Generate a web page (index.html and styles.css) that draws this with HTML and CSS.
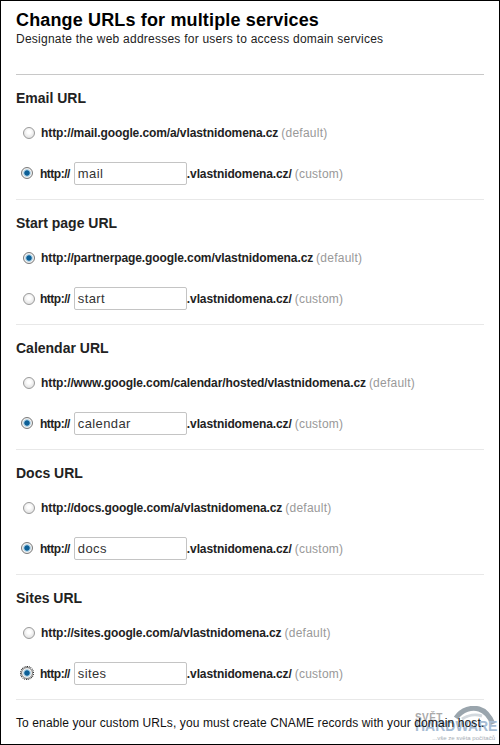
FILE: index.html
```html
<!DOCTYPE html>
<html lang="en">
<head>
<meta charset="utf-8">
<title>Change URLs</title>
<link rel="stylesheet" href="styles.css">
</head>
<body>
<main class="frame">
  <header class="head">
    <h1>Change URLs for multiple services</h1>
    <p>Designate the web addresses for users to access domain services</p>
  </header>
  <section class="svc first">
    <h2>Email URL</h2>
    <div class="row def"><span class="radio"></span><b>http://mail.google.com/a/vlastnidomena.cz</b><span class="note">(default)</span></div>
    <div class="row cus"><span class="radio on"></span><b class="pre">http://</b><span class="input">mail</span><b>.vlastnidomena.cz/</b><span class="note">(custom)</span></div>
  </section>
  <section class="svc">
    <h2>Start page URL</h2>
    <div class="row def"><span class="radio on"></span><b>http://partnerpage.google.com/vlastnidomena.cz</b><span class="note">(default)</span></div>
    <div class="row cus"><span class="radio"></span><b class="pre">http://</b><span class="input">start</span><b>.vlastnidomena.cz/</b><span class="note">(custom)</span></div>
  </section>
  <section class="svc">
    <h2>Calendar URL</h2>
    <div class="row def"><span class="radio"></span><b>http://www.google.com/calendar/hosted/vlastnidomena.cz</b><span class="note">(default)</span></div>
    <div class="row cus"><span class="radio on"></span><b class="pre">http://</b><span class="input">calendar</span><b>.vlastnidomena.cz/</b><span class="note">(custom)</span></div>
  </section>
  <section class="svc">
    <h2>Docs URL</h2>
    <div class="row def"><span class="radio"></span><b>http://docs.google.com/a/vlastnidomena.cz</b><span class="note">(default)</span></div>
    <div class="row cus"><span class="radio on"></span><b class="pre">http://</b><span class="input">docs</span><b>.vlastnidomena.cz/</b><span class="note">(custom)</span></div>
  </section>
  <section class="svc">
    <h2>Sites URL</h2>
    <div class="row def"><span class="radio"></span><b>http://sites.google.com/a/vlastnidomena.cz</b><span class="note">(default)</span></div>
    <div class="row cus"><span class="radio on focus"></span><b class="pre">http://</b><span class="input">sites</span><b>.vlastnidomena.cz/</b><span class="note">(custom)</span></div>
  </section>
  <div class="mark">
    <svg class="swoosh" width="42" height="22" viewBox="0 0 42 22"><path d="M2 12C8 3 18 1 25 3c7 2 11 8 14 15" fill="none" stroke="#9aa5ad" stroke-width="5"/><path d="M8 13c6-4 14-5 20-3" fill="none" stroke="#d3d9de" stroke-width="3"/></svg>
    <span class="m1">SVĚT</span>
    <span class="m2">HARDWARE</span>
    <span class="m3">...vše ze světa počítačů</span>
  </div>
  <p class="foot">To enable your custom URLs, you must create CNAME records with your domain host.</p>
</main>
</body>
</html>
```
FILE: styles.css
```css
* { box-sizing: border-box; }
html, body { margin: 0; padding: 0; background: #fff; }
body { width: 500px; height: 745px; font-family: "Liberation Sans", Arial, sans-serif; color: #111; }
.frame { position: relative; width: 500px; height: 745px; border: 1px solid #000; padding: 0 15px; overflow: hidden; }
.head { height: 74px; padding-top: 9px; border-bottom: 1px solid #c8c8c8; }
h1 { margin: 0; font-size: 18px; line-height: 20px; font-weight: bold; letter-spacing: 0.15px; color: #000; }
.head p { margin: 0; font-size: 12px; line-height: 18px; letter-spacing: 0.02em; color: #222; }
.svc { height: 125px; border-bottom: 1px solid #e8e8e8; }
h2 { margin: 0; padding-top: 14px; font-size: 14px; line-height: 18px; font-weight: bold; color: #222; }
.row { display: flex; align-items: center; font-size: 12px; color: #222; }
.def { margin-top: 16px; height: 20px; padding-left: 7px; }
.cus { margin-top: 19px; height: 23px; padding-left: 5px; }
.row b { font-weight: bold; letter-spacing: -0.1px; }
.radio { width: 12px; height: 12px; border-radius: 50%; border: 1px solid #9a9a9a; background: radial-gradient(circle at 50% 40%, #fff 20%, #dcdcdc 90%); margin-right: 6px; flex: none; }
.cus .radio { margin-right: 7px; margin-top: -2px; }
.cus .radio:not(.on) { margin-left: 2px; margin-right: 5px; margin-top: 0; }
.radio.on { background: radial-gradient(circle, #0d5f96 0 32%, #8fc0dc 42%, #f2f2f2 60%, #d8d8d8 100%); border-color: #7a7a7a; }
.radio.focus { outline: 1px dotted #000; outline-offset: 0; }
.row .pre { margin-right: 4px; letter-spacing: -0.5px; }
.input { width: 113px; height: 23px; border: 1px solid #c4c4c4; border-radius: 2px; padding: 0 3px; font-size: 13px; line-height: 21px; letter-spacing: 0.03em; color: #333; flex: none; }
.note { margin-left: 3px; color: #999; letter-spacing: 0.02em; }
.foot { position: relative; margin: 0; padding-top: 15px; font-size: 12px; line-height: 16px; letter-spacing: 0.11px; color: #111; white-space: nowrap; }
.mark { position: absolute; right: 3px; bottom: 1px; width: 82px; height: 37px; }
.swoosh { position: absolute; right: 0; top: 0; display: block; }
.m1 { position: absolute; left: 1px; top: 6px; font-size: 10px; line-height: 11px; font-weight: bold; color: #aaa; letter-spacing: 0.04em; }
.m2 { position: absolute; left: 1px; top: 13px; font-size: 14px; line-height: 15px; font-weight: bold; color: #a6bcd4; }
.m3 { position: absolute; right: 1px; top: 28px; font-size: 6px; line-height: 8px; color: #a5adb5; white-space: nowrap; }
```
